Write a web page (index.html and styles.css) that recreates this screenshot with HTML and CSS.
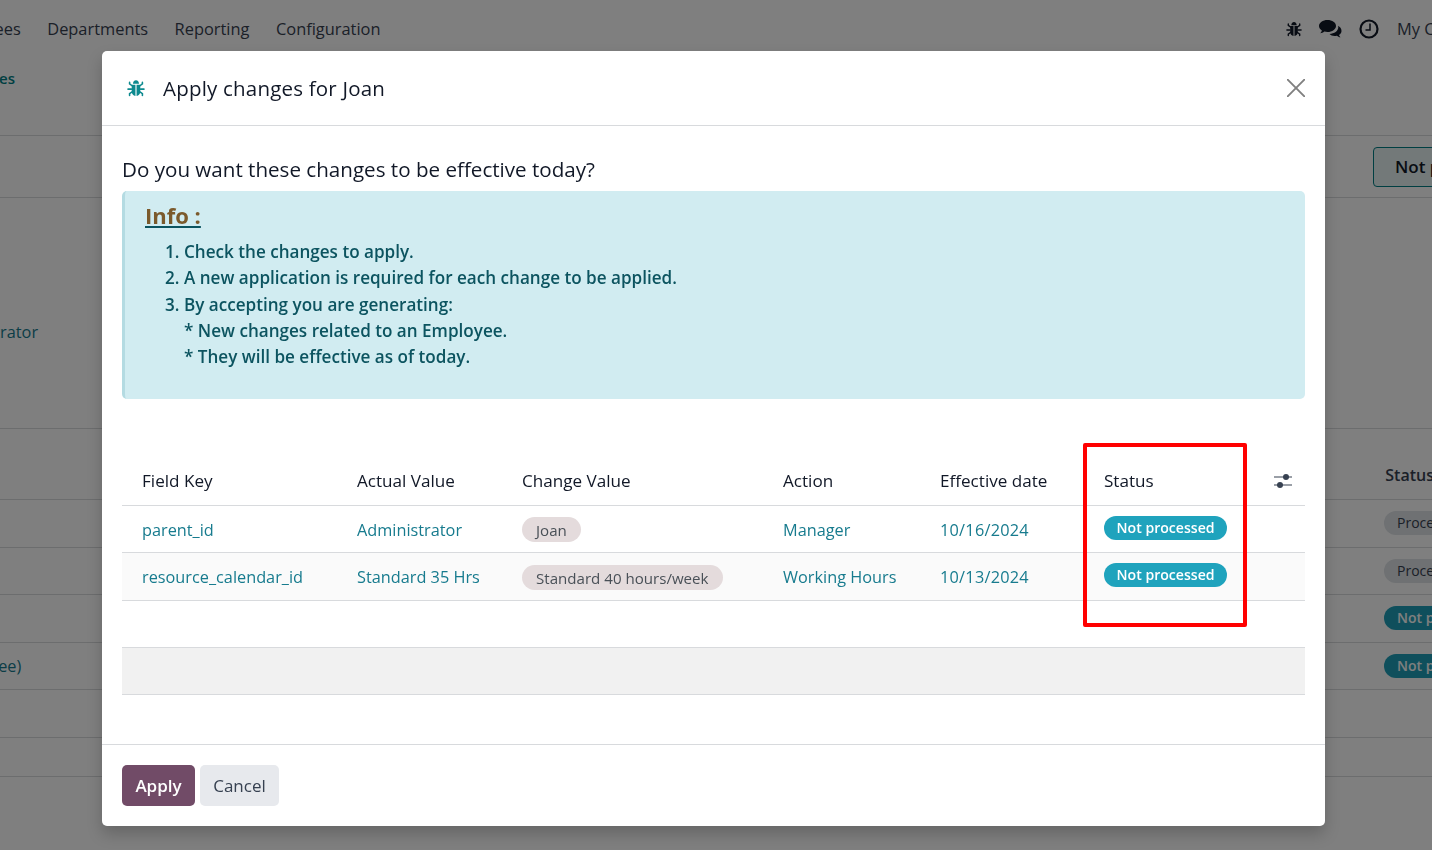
FILE: index.html
```html
<!DOCTYPE html>
<html lang="en">
<head>
<meta charset="utf-8">
<title>Apply changes for Joan</title>
<link rel="stylesheet" href="styles.css">
</head>
<body>
<svg class="defs" width="0" height="0" aria-hidden="true">
  <symbol id="bug" viewBox="0 0 16 16">
    <path fill="currentColor" d="M5.300 4.200C5.300 2.500 6.400 1 8 1s2.700 1.500 2.700 3.200H5.300zM4.200 5h3.300v10C5.600 14.800 4.200 13.200 4.200 11V5zM8.500 5h3.300v6c0 2.200-1.400 3.800-3.300 4V5z"/>
    <path fill="none" stroke="currentColor" stroke-width="1.400" stroke-linecap="round" d="M4.500 6 2.300 4.300V3M11.500 6l2.200-1.700V3M4 9H.9M12 9h3.100M4.500 11.500l-2.200 1.600v1.500M11.500 11.500l2.200 1.600v1.500"/>
  </symbol>
</svg>
<div class="app">
  <header class="nav">
    <div class="nav-left">
      <span>Employees</span><span>Departments</span><span>Reporting</span><span>Configuration</span>
    </div>
    <div class="nav-right">
      <svg class="nav-ico" width="16" height="16"><use href="#bug"/></svg>
      <svg class="nav-ico chat" width="24" height="20" viewBox="0 0 24 20"><path fill="currentColor" d="M9.500 1C4.800 1 1 3.700 1 7c0 1.800 1.100 3.400 2.900 4.500-.3 1-.9 1.900-1.700 2.700 1.500-.2 3-.9 4.100-1.800 1 .3 2.100.5 3.200.5 4.700 0 8.500-2.700 8.500-6S14.200 1 9.500 1z"/><path fill="currentColor" d="M20 6.800c.2.500.3 1 .3 1.500 0 3.700-4 6.500-8.800 6.700 1.100 1.200 3 2 5.100 2 .8 0 1.600-.1 2.300-.3.9.8 2.200 1.400 3.600 1.600-.7-.7-1.200-1.500-1.500-2.400 1.500-.9 2.500-2.300 2.500-3.900 0-2.300-1.500-4.200-3.500-5.200z"/></svg>
      <svg class="nav-ico" width="20" height="20" viewBox="0 0 20 20"><circle cx="10" cy="10" r="8.500" fill="none" stroke="currentColor" stroke-width="2.200"/><path fill="none" stroke="currentColor" stroke-width="1.500" d="M11 4.500V11H6.500"/></svg>
      <span class="company">My Company</span>
    </div>
  </header>
  <div class="sub"><span class="crumb">Employees</span></div>
  <div class="band band-action"><span></span><button class="not-btn" type="button">Not processed</button></div>
  <div class="band band-info"><span class="teal-text admin">Administrator</span></div>
  <div class="band band-head"><span></span><span class="status-head">Status</span></div>
  <div class="band band-row"><span></span><span class="bg-pill grey">Processed</span></div>
  <div class="band band-row"><span></span><span class="bg-pill grey">Processed</span></div>
  <div class="band band-row"><span></span><span class="bg-pill teal">Not processed</span></div>
  <div class="band band-row"><span class="teal-text emp">Employee)</span><span class="bg-pill teal">Not processed</span></div>
  <div class="band band-row"></div>
  <div class="band band-last"></div>
</div>
<div class="backdrop"></div>
<section class="modal">
  <header class="modal-head">
    <svg class="head-ico" width="18" height="18"><use href="#bug"/></svg>
    <h2>Apply changes for Joan</h2>
    <svg class="close" width="18" height="18" viewBox="0 0 18 18"><path d="M0 0l18 18M18 0 0 18" fill="none" stroke="currentColor" stroke-width="1.900"/></svg>
  </header>
  <div class="modal-body">
    <p class="question">Do you want these changes to be effective today?</p>
    <div class="alert">
      <h3 class="alert-title"><span>Info :</span></h3>
      <ol>
        <li>Check the changes to apply.</li>
        <li>A new application is required for each change to be applied.</li>
        <li>By accepting you are generating:
          <div>* New changes related to an Employee.</div>
          <div>* They will be effective as of today.</div>
        </li>
      </ol>
    </div>
    <table class="changes">
      <colgroup><col class="c1"><col class="c2"><col class="c3"><col class="c4"><col class="c5"><col class="c6"><col class="c7"></colgroup>
      <thead>
        <tr><th>Field Key</th><th>Actual Value</th><th>Change Value</th><th>Action</th><th>Effective date</th><th>Status</th>
          <th><svg class="sliders" width="20" height="20" viewBox="0 0 20 20"><path d="M1 6h18M1 14h18" stroke="currentColor" stroke-width="1.200"/><circle cx="13" cy="6" r="3" fill="currentColor"/><circle cx="7" cy="14" r="3" fill="currentColor"/></svg></th></tr>
      </thead>
      <tbody>
        <tr><td>parent_id</td><td>Administrator</td><td><span class="chip">Joan</span></td><td>Manager</td><td class="date">10/16/2024</td><td><span class="status">Not processed</span></td><td></td></tr>
        <tr class="even"><td>resource_calendar_id</td><td>Standard 35 Hrs</td><td><span class="chip">Standard 40 hours/week</span></td><td>Working Hours</td><td class="date">10/13/2024</td><td><span class="status">Not processed</span></td><td></td></tr>
        <tr class="blank"><td colspan="7"></td></tr>
      </tbody>
      <tfoot><tr><td colspan="7"></td></tr></tfoot>
    </table>
  </div>
  <footer class="modal-foot">
    <button class="btn primary" type="button">Apply</button>
    <button class="btn secondary" type="button">Cancel</button>
  </footer>
  <div class="highlight"></div>
</section>
</body>
</html>
```
FILE: styles.css
```css
* { box-sizing: border-box; }
html, body { margin: 0; height: 850px; overflow: hidden; }
body { font-family: "Open Sans", "Noto Sans", sans-serif; font-size: 16px; color: #212529; background: #fff; position: relative; }
.defs { position: absolute; }

.app { width: 1432px; height: 850px; overflow: hidden; display: flex; flex-direction: column; color: #374151; }
.nav { height: 57px; flex: none; display: flex; justify-content: space-between; align-items: center; white-space: nowrap; }
.nav-left { display: flex; gap: 26.500px; margin-left: -62px; font-size: 16.400px; }
.nav-right { display: flex; align-items: center; gap: 18px; margin-right: -65px; }
.nav-ico { color: #111827; }
.chat { margin-left: -2px; margin-right: -1px; }
.company { font-size: 16.400px; }
.sub { height: 79px; flex: none; border-bottom: 1px solid #d8dadd; }
.crumb { display: block; margin-left: -63px; margin-top: 11px; color: #017e84; font-weight: 600; font-size: 15px; }
.band { flex: none; border-bottom: 1px solid #d8dadd; display: flex; justify-content: space-between; align-items: center; white-space: nowrap; }
.band-action { height: 62px; }
.band-info { height: 231px; }
.band-head { height: 71px; align-items: flex-end; padding-bottom: 13px; }
.band-row { height: 47.500px; }
.band-last { height: 39px; }
.not-btn { width: 130px; height: 40px; margin-right: -71px; padding: 0 0 0 21px; border: 1px solid #017e84; border-radius: 4px; background: #e6f2f3; color: #111827; text-align: left; font: 600 17px "Open Sans", sans-serif; white-space: nowrap; overflow: hidden; }
.status-head { margin-right: -2px; font-weight: 600; }
.teal-text { color: #177b8e; font-size: 16.300px; }
.admin { margin-left: -67px; margin-top: 38px; }
.emp { margin-left: -58px; }
.bg-pill { width: 110px; height: 24px; margin-right: -62px; padding-left: 13px; border-radius: 12px; font-size: 14px; line-height: 24px; }
.grey { background: #dee2e6; }
.teal { background: #1f9fb8; color: #fff; font-weight: 600; }

.backdrop { position: fixed; inset: 0; background: rgba(0, 0, 0, .5); }
.modal { position: absolute; left: 102px; top: 51px; width: 1223px; height: 775px; background: #fff; border-radius: 5px; box-shadow: 0 8px 16px rgba(0, 0, 0, .2); display: flex; flex-direction: column; }
.modal-head { height: 75px; flex: none; border-bottom: 1px solid #d8dadd; display: flex; align-items: center; padding: 0 20px 0 25px; color: #0d8a8f; }
.head-ico { flex: none; }
.modal-head h2 { flex: 1; margin: 0 0 0 18px; font-size: 20.500px; font-weight: 400; color: #111827; letter-spacing: .2px; }
.close { flex: none; color: #808080; }
.modal-body { flex: 1; padding: 28px 20px 0; }
.question { margin: 0 0 7px; font-size: 20.600px; line-height: 30px; color: #111827; }
.alert { height: 208px; padding: 8px 20px; background: #d1ecf1; border-left: 3px solid #b4dbe2; border-radius: 5px; color: #0c5460; font-weight: 600; font-size: 17.100px; }
.alert-title { margin: 0 0 8px; font-size: 22px; line-height: 32px; font-weight: 700; }
.alert-title span { color: #7b5a2c; text-decoration: underline; text-decoration-color: #0c5460; }
.alert ol { margin: 0; padding-left: 39px; line-height: 26.300px; }
.changes { width: 1183px; margin-top: 44px; table-layout: fixed; border-collapse: collapse; font-size: 16.300px; }
.c1 { width: 215px; } .c2 { width: 165px; } .c3 { width: 261px; } .c4 { width: 157px; } .c5 { width: 164px; } .c6 { width: 179px; } .c7 { width: 42px; }
.changes th { height: 62px; padding: 14px 0 0 20px; text-align: left; font-size: 17.100px; font-weight: 500; color: #111827; border-bottom: 1px solid #d8dadd; }
.changes th:last-child { padding-left: 10px; }
.changes td { height: 47.500px; padding: 2px 0 0 20px; color: #177b8e; border-bottom: 1px solid #d8dadd; white-space: nowrap; }
.changes .date { letter-spacing: .25px; }
.changes .even td { background: #fafafa; }
.changes tfoot td { height: 47px; background: #f1f1f1; border-top: 1px solid #d8dadd; }
.sliders { display: block; color: #374151; }
.chip { display: inline-block; height: 25px; padding: 0 14px; border-radius: 13px; background: #e4dbdc; color: #495057; font-size: 15.100px; line-height: 26px; }
.status { display: inline-block; height: 24px; padding: 0 12.500px; border-radius: 12px; background: #1fa3bd; color: #fff; font-weight: 600; font-size: 14.100px; line-height: 24px; margin-bottom: 4px; }
.modal-foot { height: 82px; flex: none; border-top: 1px solid #d8dadd; padding: 20px; display: flex; gap: 5px; align-items: flex-start; }
.btn { height: 41px; border: 0; border-radius: 5px; font: 17px "Open Sans", sans-serif; }
.primary { width: 73px; background: #714b67; color: #fff; font-weight: 600; }
.secondary { width: 79px; background: #e7e9ed; color: #374151; }
.highlight { position: absolute; left: 981px; top: 392px; width: 164px; height: 184px; border: 4px solid #f00; border-radius: 2px; }
```
